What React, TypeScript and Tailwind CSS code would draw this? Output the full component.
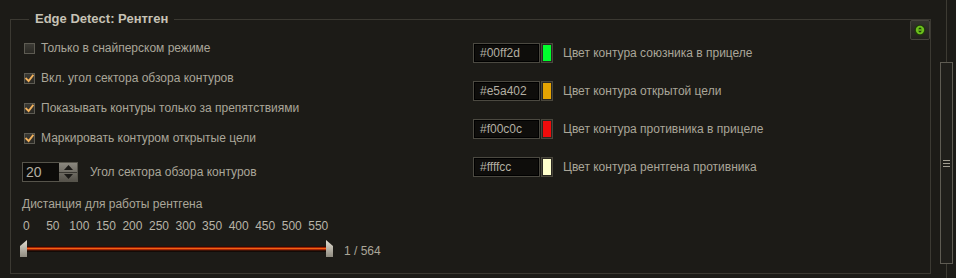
import React from 'react';

const font = { fontFamily: '"Liberation Sans", Arial, sans-serif' };

function CheckBox({ label, checked }: { label: string; checked?: boolean }) {
  return (
    <div className="flex items-center h-[30px] pl-[2px]">
      <div className="w-[11px] h-[11px] border border-[#5d5b52] bg-gradient-to-b from-[#3c3b35] to-[#2a2924] flex items-center justify-center">
        {checked && (
          <svg width="9" height="9" viewBox="0 0 9 9">
            <path d="M1.2 4.6 L3.6 7 L7.8 1.6" fill="none" stroke="#f3b25c" strokeWidth="1.9" strokeLinecap="square" />
          </svg>
        )}
      </div>
      <span className="ml-[6px] text-[12px] text-[#aaa699]">{label}</span>
    </div>
  );
}

function ColorRow({ hex, label }: { hex: string; label: string }) {
  return (
    <div className="flex items-center h-[20px]">
      <div className="w-[67px] h-[20px] border border-[#4b4941] bg-[#0e0d0b] flex items-center pl-[6px] text-[12px] text-[#b3afa3] shadow-[inset_0_0_0_1px_#000]">
        {hex}
      </div>
      <div className="ml-[1px] w-[12px] h-[20px] border border-[#4a473d] p-px bg-[#2a2822]">
        <div className="w-full h-full" style={{ backgroundColor: hex }} />
      </div>
      <span className="ml-[10px] text-[12px] text-[#aaa699]">{label}</span>
    </div>
  );
}

function Thumb({ flip }: { flip?: boolean }) {
  return (
    <svg width="7" height="17" viewBox="0 0 7 17" className="shrink-0">
      <defs>
        <linearGradient id={flip ? 'tr' : 'tl'} x1="0" y1="0" x2="0" y2="1">
          <stop offset="0" stopColor="#e2ded2" />
          <stop offset="1" stopColor="#8f8b80" />
        </linearGradient>
      </defs>
      <polygon
        points={flip ? '0,0 7,6 7,17 0,17' : '0,6 7,0 7,17 0,17'}
        fill={`url(#${flip ? 'tr' : 'tl'})`}
      />
    </svg>
  );
}

export default function App() {
  const ticks = ['0', '50', '100', '150', '200', '250', '300', '350', '400', '450', '500', '550'];

  return (
    <div className="w-[956px] h-[278px] bg-[#1c1b17] flex overflow-hidden" style={font}>
      {/* Settings group */}
      <fieldset className="mt-[11px] ml-[10px] w-[921px] h-[263px] border border-[#3b3932] flex items-start">
        <legend className="ml-[18px] px-[6px] text-[13px] leading-[16px] font-bold text-[#c6c2b5]">
          Edge Detect: Рентген
        </legend>

        {/* Left column */}
        <div className="w-[451px] pl-[11px] pt-[6px] flex flex-col">
          <CheckBox label="Только в снайперском режиме" />
          <CheckBox label="Вкл. угол сектора обзора контуров" checked />
          <CheckBox label="Показывать контуры только за препятствиями" checked />
          <CheckBox label="Маркировать контуром открытые цели" checked />

          <div className="flex items-center mt-[9px] h-[20px]">
            <div className="flex h-[20px] border border-[#56544b]">
              <div className="w-[36px] bg-[#0d0c0a] text-[14px] text-[#b3afa3] pl-[3px] leading-[18px]">20</div>
              <div className="w-[18px] flex flex-col bg-gradient-to-b from-[#8b887f] to-[#56534b]">
                <div className="flex-1 flex items-center justify-center border-b border-[#3a3832]">
                  <svg width="9" height="5" viewBox="0 0 9 5"><polygon points="0,5 4.5,0 9,5" fill="#1b1a17" /></svg>
                </div>
                <div className="flex-1 flex items-center justify-center">
                  <svg width="9" height="5" viewBox="0 0 9 5"><polygon points="0,0 4.5,5 9,0" fill="#1b1a17" /></svg>
                </div>
              </div>
            </div>
            <span className="ml-[12px] text-[12px] text-[#aaa699]">Угол сектора обзора контуров</span>
          </div>

          <div className="mt-[15px] text-[12px] leading-[15px] text-[#aaa699]">Дистанция для работы рентгена</div>

          <div className="mt-[7px] -ml-[9px] grid grid-cols-[repeat(12,26.56px)] text-[12px] leading-[15px] text-[#b8b4a7]">
            {ticks.map((t) => (
              <span key={t} className="text-center">{t}</span>
            ))}
          </div>

          <div className="mt-[3px] flex items-center -ml-[2px]">
            <Thumb />
            <div className="w-[299px] h-[6px] flex flex-col bg-[#140a06]">
              <div className="h-px bg-[#2a0f06]" />
              <div className="h-px bg-[#9a1e04]" />
              <div className="h-px bg-[#f06412]" />
              <div className="h-px bg-[#a8260a]" />
              <div className="h-px bg-[#3a1206]" />
            </div>
            <Thumb flip />
            <span className="ml-[11px] mt-[5px] text-[12px] text-[#aaa699]">1 / 564</span>
          </div>
        </div>

        {/* Right column */}
        <div className="ml-[11px] pt-[16px] flex flex-col gap-[18px]">
          <ColorRow hex="#00ff2d" label="Цвет контура союзника в прицеле" />
          <ColorRow hex="#e5a402" label="Цвет контура открытой цели" />
          <ColorRow hex="#f00c0c" label="Цвет контура противника в прицеле" />
          <ColorRow hex="#ffffcc" label="Цвет контура рентгена противника" />
        </div>

        <div className="flex-1" />

        {/* Collapse button */}
        <div className="-mt-[7px] w-[20px] h-[20px] rounded-[2px] border border-[#46443c] bg-gradient-to-b from-[#34332e] to-[#22211d] flex items-center justify-center">
          <svg width="12" height="12" viewBox="0 0 12 12">
            <circle cx="6" cy="6" r="5.5" fill="#1f3a0c" />
            <circle cx="6" cy="6" r="4.2" fill="#6cc01c" />
            <polygon points="4,5.2 6,3.2 8,5.2" fill="#1d3a0a" />
            <polygon points="4,6.8 6,8.8 8,6.8" fill="#1d3a0a" />
          </svg>
        </div>
      </fieldset>

      {/* Scrollbar */}
      <div className="ml-[9px] w-[13px] flex flex-col">
        <div className="h-[62px] w-px ml-[6px] bg-[#3d3b33]" />
        <div className="h-[202px] border border-[#5f5c53] bg-[#201f1b] flex items-center justify-center">
          <div className="flex flex-col gap-[2px]">
            <div className="w-[7px] h-px bg-[#a29e92]" />
            <div className="w-[7px] h-px bg-[#a29e92]" />
            <div className="w-[7px] h-px bg-[#a29e92]" />
          </div>
        </div>
        <div className="flex-1 w-px ml-[6px] bg-[#3d3b33]" />
      </div>
    </div>
  );
}
